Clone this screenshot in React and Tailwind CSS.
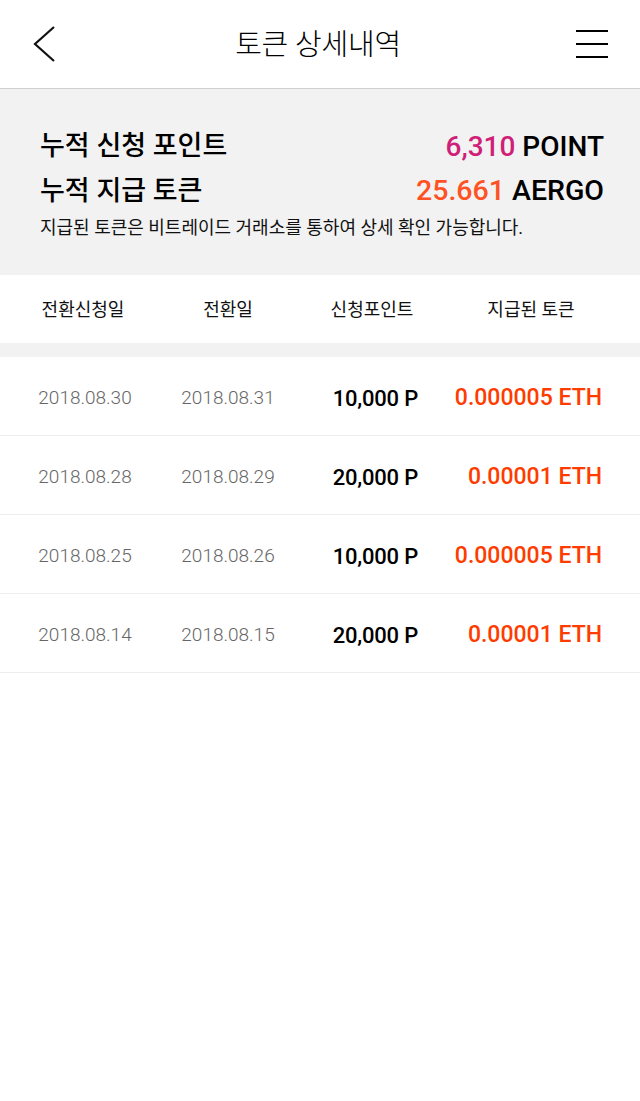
import React from 'react';

const font = { fontFamily: 'Roboto, "Noto Sans CJK KR", sans-serif' };

const rows = [
    { req: '2018.08.30', done: '2018.08.31', point: '10,000 P', token: '0.000005 ETH' },
    { req: '2018.08.28', done: '2018.08.29', point: '20,000 P', token: '0.00001 ETH' },
    { req: '2018.08.25', done: '2018.08.26', point: '10,000 P', token: '0.000005 ETH' },
    { req: '2018.08.14', done: '2018.08.15', point: '20,000 P', token: '0.00001 ETH' },
];

function App() {
    return (
        <div className="w-[640px] min-h-[1101px] bg-white text-black" style={font}>
            {/* 상단 헤더 */}
            <header className="h-[89px] flex items-center justify-between px-[32px] border-b border-[#cfcfcf]">
                <button className="w-[26px] h-[40px] flex items-center">
                    <svg width="24" height="38" viewBox="0 0 24 38" fill="none" stroke="#111" strokeWidth="2.2">
                        <path d="M22 2 L3 19 L22 36" />
                    </svg>
                </button>
                <h1 className="text-[29px] font-light tracking-[-0.2px] leading-none pl-[2px] pt-[3px]">토큰 상세내역</h1>
                <button className="w-[32px] flex flex-col gap-[10.5px]">
                    <span className="block h-[2.5px] bg-black" />
                    <span className="block h-[2.5px] bg-black" />
                    <span className="block h-[2.5px] bg-black" />
                </button>
            </header>

            {/* 누적 요약 */}
            <section className="bg-[#f2f2f2] px-[40px] pr-[36px] pt-[35px] pb-[35px]">
                <div className="h-[45px] flex items-center justify-between">
                    <span className="text-[27px] font-medium">누적 신청 포인트</span>
                    <span className="text-[28px] font-medium">
                        <span className="text-[#d01f78]">6,310</span> POINT
                    </span>
                </div>
                <div className="h-[45px] flex items-center justify-between">
                    <span className="text-[27px] font-medium">누적 지급 토큰</span>
                    <span className="text-[28.5px] font-medium">
                        <span className="text-[#ff5224]">25.661</span> AERGO
                    </span>
                </div>
                <p className="mt-[2px] text-[18px] leading-[24px] text-[#111]">
                    지급된 토큰은 비트레이드 거래소를 통하여 상세 확인 가능합니다.
                </p>
            </section>

            {/* 표 머리 */}
            <div className="h-[68px] grid grid-cols-[166px_124px_164px_154px] items-center text-[18px] text-[#111] border-b-[14px] border-[#f2f2f2] box-content">
                <span className="text-center">전환신청일</span>
                <span className="text-center">전환일</span>
                <span className="text-center">신청포인트</span>
                <span className="text-center">지급된 토큰</span>
            </div>

            {/* 내역 목록 */}
            <ul>
                {rows.map((row, idx) => (
                    <li key={idx} className="h-[79px] pt-[5px] grid grid-cols-[170px_116px_132px_184px] items-center border-b border-[#ededed]">
                        <span className="text-center text-[19px] font-light text-[#666]">{row.req}</span>
                        <span className="text-center text-[19px] font-light text-[#666]">{row.done}</span>
                        <span className="text-right text-[22px] font-medium tracking-[-0.2px]">{row.point}</span>
                        <span className="text-right text-[23px] font-medium text-[#ff3c00]">{row.token}</span>
                    </li>
                ))}
            </ul>
        </div>
    );
}

export default App;
